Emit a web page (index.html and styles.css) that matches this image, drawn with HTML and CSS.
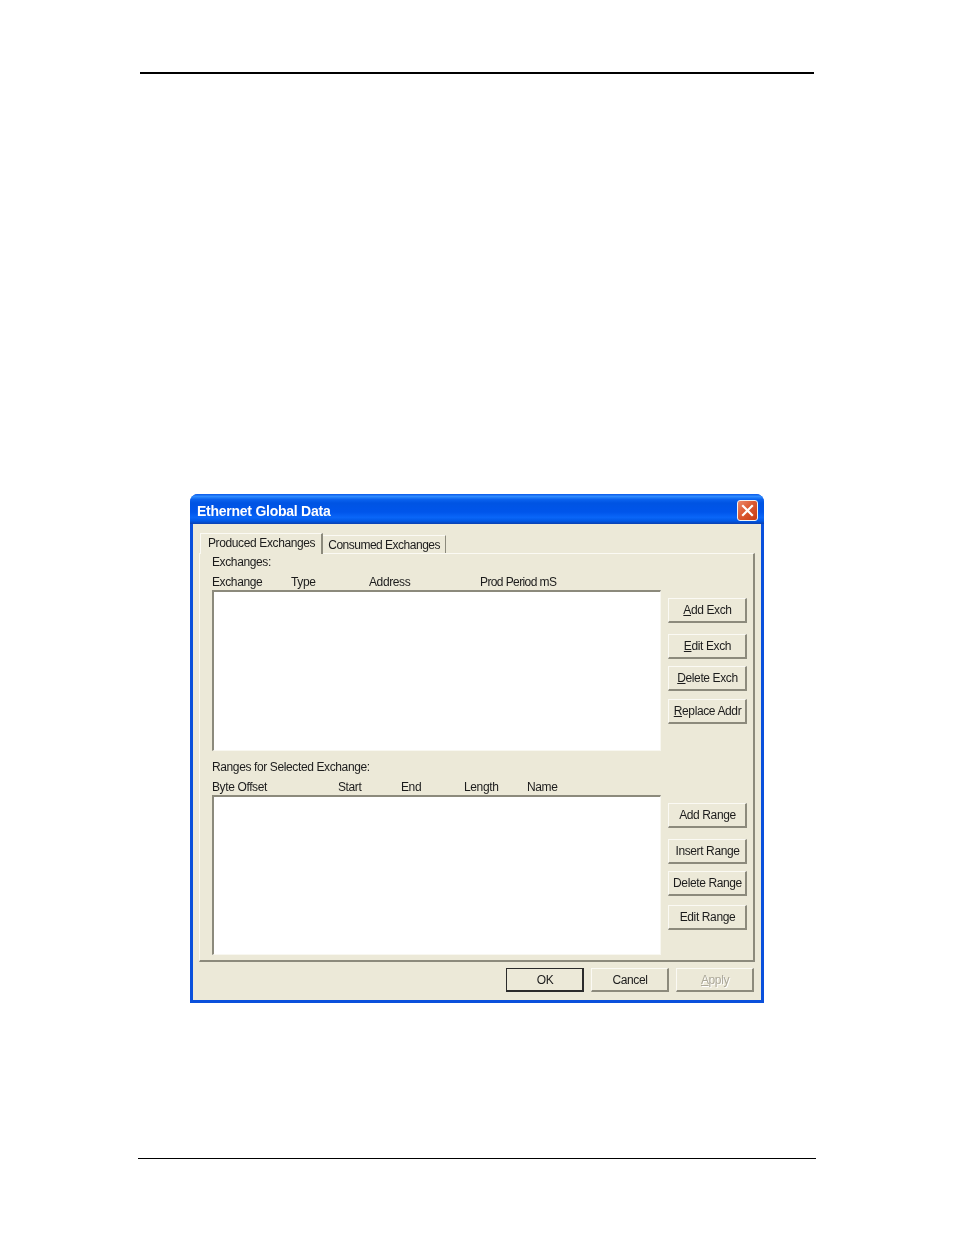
FILE: index.html
```html
<!DOCTYPE html>
<html lang="en">
<head>
    <meta charset="UTF-8">
    <title>Ethernet Global Data</title>
    <link rel="stylesheet" href="styles.css">
</head>
<body>
    <div class="page">
        <div class="rule-top"></div>

        <div class="window">
            <div class="titlebar">
                <span class="title">Ethernet Global Data</span>
                <div class="close">
                    <svg width="15" height="15" viewBox="0 0 15 15">
                        <path d="M3 3 L12 12 M12 3 L3 12" stroke="#fff" stroke-width="2.2" stroke-linecap="square" fill="none"/>
                    </svg>
                </div>
            </div>

            <div class="client">
                <div class="tabs">
                    <div class="tab active">Produced Exchanges</div>
                    <div class="tab">Consumed Exchanges</div>
                </div>

                <div class="panel">
                    <div class="section">
                        <div class="label">Exchanges:</div>
                        <div class="heads heads-exch">
                            <span>Exchange</span>
                            <span>Type</span>
                            <span>Address</span>
                            <span>Prod Period mS</span>
                        </div>
                        <div class="list list-exch"></div>
                        <div class="side">
                            <button class="btn"><u>A</u>dd Exch</button>
                            <button class="btn gap-a"><u>E</u>dit Exch</button>
                            <button class="btn gap-b"><u>D</u>elete Exch</button>
                            <button class="btn gap-c"><u>R</u>eplace Addr</button>
                        </div>
                    </div>

                    <div class="section section-ranges">
                        <div class="label">Ranges for Selected Exchange:</div>
                        <div class="heads heads-range">
                            <span>Byte Offset</span>
                            <span>Start</span>
                            <span>End</span>
                            <span>Length</span>
                            <span>Name</span>
                        </div>
                        <div class="list list-range"></div>
                        <div class="side">
                            <button class="btn">Add Range</button>
                            <button class="btn gap-a">Insert Range</button>
                            <button class="btn gap-b">Delete Range</button>
                            <button class="btn gap-d">Edit Range</button>
                        </div>
                    </div>
                </div>

                <div class="footer">
                    <button class="btn default">OK</button>
                    <button class="btn">Cancel</button>
                    <button class="btn disabled"><u>A</u>pply</button>
                </div>
            </div>
        </div>

        <div class="rule-bottom"></div>
    </div>
</body>
</html>
```

FILE: styles.css
```css
body {
    margin: 0;
    background: #fff;
    font-family: "Liberation Sans", Arial, sans-serif;
    font-size: 12px;
    letter-spacing: -0.38px;
    color: #1c1c1c;
}
.page {
    height: 1235px;
    padding-top: 72px;
    box-sizing: border-box;
    overflow: hidden;
}
.rule-top {
    height: 2px;
    margin: 0 140px;
    background: #000;
}
.rule-bottom {
    height: 1px;
    margin: 155px 138px 0;
    background: #000;
}
.window {
    width: 574px;
    height: 509px;
    margin: 420px 0 0 190px;
    border-radius: 8px 8px 0 0;
    overflow: hidden;
    background: #0a50dc;
    display: flex;
    flex-direction: column;
    filter: blur(0.35px);
}
.titlebar {
    height: 30px;
    flex: none;
    display: flex;
    align-items: center;
    justify-content: space-between;
    padding: 2px 6px 0 7px;
    box-sizing: border-box;
    background: linear-gradient(#0a58e8 0%, #2f8cff 8%, #0a62ee 18%, #0054e3 30%, #0055eb 60%, #0a66f8 78%, #0058e6 90%, #0a3fb0 100%);
}
.title {
    margin-top: 2px;
    color: #fff;
    font-weight: bold;
    font-size: 14px;
    letter-spacing: -0.25px;
}
.close {
    width: 21px;
    height: 21px;
    box-sizing: border-box;
    border: 1px solid #f2f2f2;
    border-radius: 3px;
    background: linear-gradient(135deg, #ec8a6c 0%, #dc5a32 45%, #c63c14 100%);
    display: flex;
    align-items: center;
    justify-content: center;
}
.client {
    flex: 1;
    margin: 0 3px 3px;
    padding: 8px 6px 0;
    background: #ece9d8;
    display: flex;
    flex-direction: column;
}
.tabs {
    display: flex;
    align-items: flex-end;
    height: 21px;
    padding-left: 1px;
}
.tab {
    height: 18px;
    line-height: 18px;
    padding: 0 5px;
    box-sizing: border-box;
    letter-spacing: -0.5px;
    border-right: 1px solid #8c8a7c;
    border-top: 1px solid #fbfaf4;
    white-space: nowrap;
}
.tab.active {
    height: 21px;
    line-height: 18px;
    padding: 0 6px 0 7px;
    margin-bottom: -1px;
    letter-spacing: inherit;
    border-left: 1px solid #fbfaf4;
    border-right: 2px solid #8c8a7c;
    background: #ece9d8;
    position: relative;
    z-index: 1;
}
.panel {
    width: 556px;
    height: 409px;
    box-sizing: border-box;
    padding-left: 12px;
    border-top: 1px solid #fbfaf4;
    border-left: 1px solid #fbfaf4;
    border-right: 2px solid #8c8a7c;
    border-bottom: 2px solid #8c8a7c;
}
.section {
    display: grid;
    grid-template-columns: 449px 79px;
    column-gap: 7px;
    grid-template-rows: 16px 16px auto;
    row-gap: 4px;
}
.section .list {
    grid-column: 1;
    margin-top: -4px;
}
.section .side {
    grid-column: 2;
    margin-top: -4px;
}
.section-ranges {
    margin-top: 8px;
}
.label {
    grid-column: 1 / 3;
    line-height: 16px;
    white-space: nowrap;
}
.heads {
    grid-column: 1 / 3;
    display: grid;
    line-height: 16px;
    white-space: nowrap;
}
.heads-exch {
    grid-template-columns: 79px 78px 111px auto;
}
.heads-exch span:last-child {
    letter-spacing: -0.6px;
}
.heads-range {
    grid-template-columns: 126px 63px 63px 63px auto;
}
.list {
    background: #fff;
    box-sizing: border-box;
    border-top: 2px solid #8c8a7c;
    border-left: 2px solid #8c8a7c;
    border-right: 1px solid #f8f7f0;
    border-bottom: 1px solid #f8f7f0;
}
.list-exch {
    height: 161px;
}
.list-range {
    height: 160px;
}
.side {
    display: flex;
    flex-direction: column;
    padding-top: 8px;
}
.btn {
    width: 79px;
    height: 25px;
    flex: none;
    padding: 0 0 0 1px;
    box-sizing: border-box;
    font: inherit;
    letter-spacing: inherit;
    color: inherit;
    white-space: nowrap;
    background: #ece9d8;
    border: 1px solid;
    border-color: #fbfaf4 #8c8a7c #8c8a7c #fbfaf4;
    border-right-width: 2px;
    border-bottom-width: 2px;
}
.gap-a {
    margin-top: 11px;
}
.gap-b {
    margin-top: 7px;
}
.gap-c {
    margin-top: 8px;
}
.gap-d {
    margin-top: 9px;
}
.footer {
    display: flex;
    justify-content: flex-end;
    gap: 7px;
    padding: 6px 1px 0 0;
}
.footer .btn {
    width: 78px;
    height: 24px;
}
.btn.default {
    border: 2px solid #2b2b2b;
    border-top-width: 1px;
    border-left-width: 1px;
}
.btn.disabled {
    color: #aca899;
    text-shadow: 1px 1px 0 #fff;
}
```
